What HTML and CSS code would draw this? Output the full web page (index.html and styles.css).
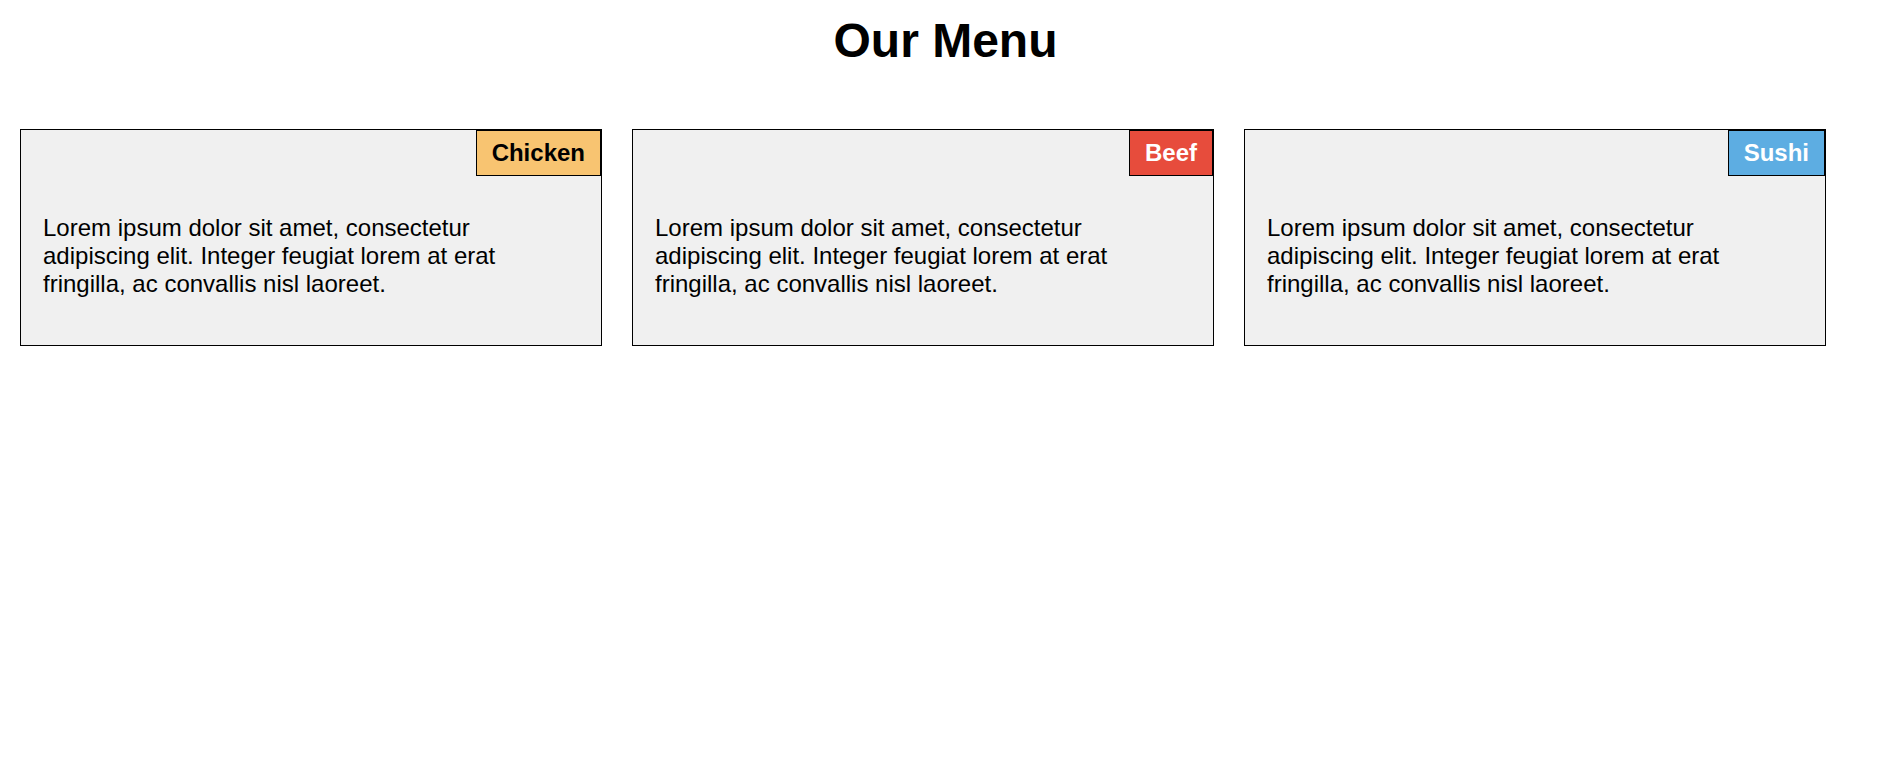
FILE: index.html
```html
<!DOCTYPE html>
<html lang="en">
<head>
<meta charset="utf-8">
<title>Our Menu</title>
<link rel="stylesheet" href="styles.css">
</head>
<body>
  <h1 class="title">Our Menu</h1>
  <div class="menu">
    <div class="card">
      <span class="badge badge-chicken">Chicken</span>
      <p class="card-text">Lorem ipsum dolor sit amet, consectetur adipiscing elit. Integer feugiat lorem at erat fringilla, ac convallis nisl laoreet.</p>
    </div>
    <div class="card">
      <span class="badge badge-beef">Beef</span>
      <p class="card-text">Lorem ipsum dolor sit amet, consectetur adipiscing elit. Integer feugiat lorem at erat fringilla, ac convallis nisl laoreet.</p>
    </div>
    <div class="card">
      <span class="badge badge-sushi">Sushi</span>
      <p class="card-text">Lorem ipsum dolor sit amet, consectetur adipiscing elit. Integer feugiat lorem at erat fringilla, ac convallis nisl laoreet.</p>
    </div>
  </div>
</body>
</html>
```

FILE: styles.css
```css
html, body {
  margin: 0;
  padding: 0;
  background: #ffffff;
}

body {
  font-family: "Liberation Sans", Arial, sans-serif;
  color: #000;
}

.title {
  margin: 13px 0 0;
  font-size: 48px;
  font-weight: bold;
  text-align: center;
  line-height: normal;
}

.menu {
  display: grid;
  grid-template-columns: repeat(3, 582px);
  column-gap: 30px;
  padding-left: 20px;
  margin-top: 61px;
}

.card {
  position: relative;
  background: #f0f0f0;
  border: 1px solid #000;
  padding: 84px 20px 47px 22px;
}

.card-text {
  margin: 0;
  font-size: 24px;
  line-height: normal;
}

.badge {
  position: absolute;
  top: 0;
  right: 0;
  border: 1px solid #000;
  padding: 8px 15px;
  font-size: 24px;
  font-weight: bold;
  line-height: normal;
}

.badge-chicken {
  background: #f8c471;
  color: #000;
}

.badge-beef {
  background: #e74c3c;
  color: #fff;
}

.badge-sushi {
  background: #5dade2;
  color: #fff;
}
```
